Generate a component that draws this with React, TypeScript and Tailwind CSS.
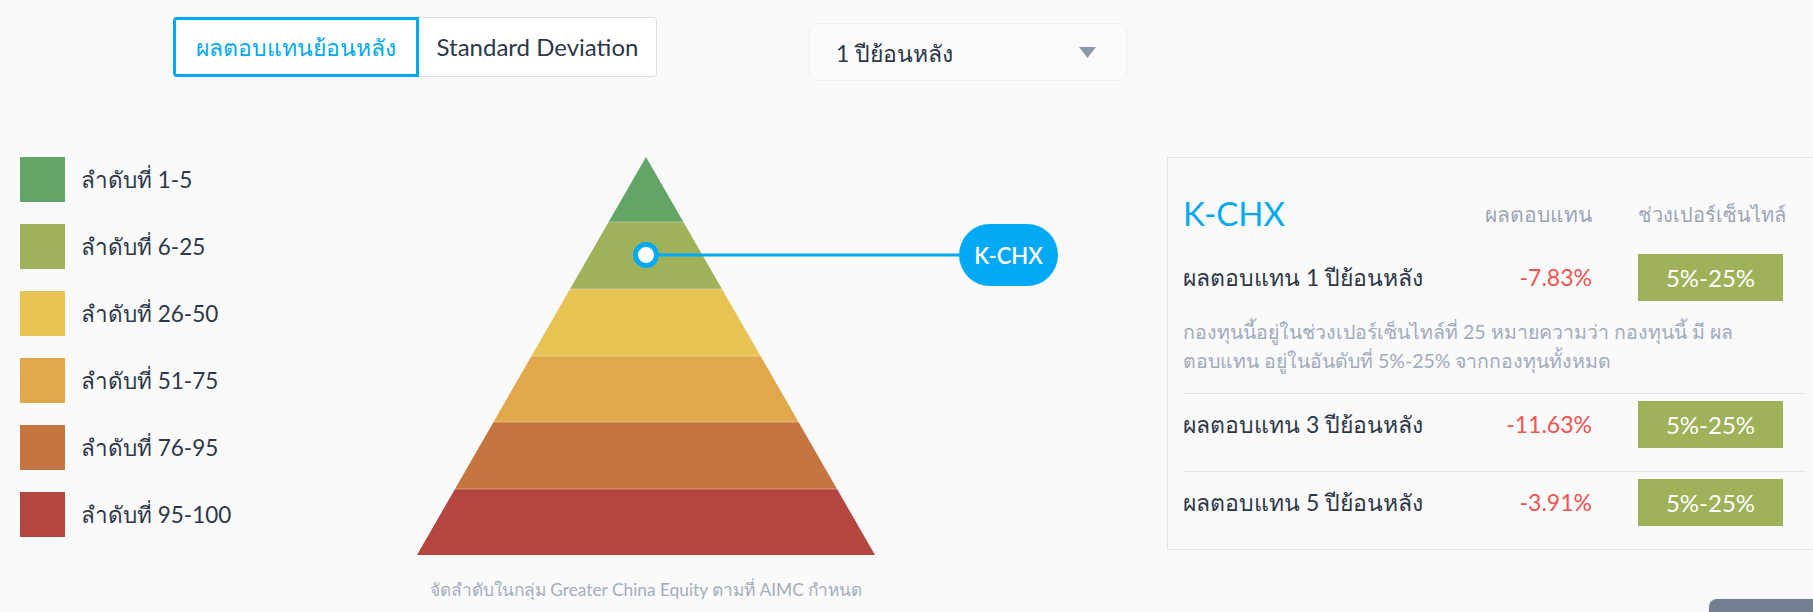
import React from "react";

const font = { fontFamily: 'Lato, "Noto Sans", sans-serif' };

const legend = [
  { color: "bg-[#62a567]", label: "ลำดับที่ 1-5" },
  { color: "bg-[#9fb25a]", label: "ลำดับที่ 6-25" },
  { color: "bg-[#e7c353]", label: "ลำดับที่ 26-50" },
  { color: "bg-[#e0a84b]", label: "ลำดับที่ 51-75" },
  { color: "bg-[#c57640]", label: "ลำดับที่ 76-95" },
  { color: "bg-[#b4453f]", label: "ลำดับที่ 95-100" },
];

// pyramid geometry, apex at (246, 0), base at y = 398
const bands = [
  { top: 0, bottom: 65, fill: "#62a567" },
  { top: 65, bottom: 132, fill: "#9fb25a" },
  { top: 132, bottom: 199, fill: "#e7c353" },
  { top: 199, bottom: 265, fill: "#e0a84b" },
  { top: 265, bottom: 332, fill: "#c57640" },
  { top: 332, bottom: 398, fill: "#b4453f" },
];
const apexX = 246;
const slope = 229 / 398;

function band(top: number, bottom: number) {
  const t = top * slope;
  const b = bottom * slope;
  return `${apexX - t},${top} ${apexX + t},${top} ${apexX + b},${bottom} ${apexX - b},${bottom}`;
}

const rows = [
  { label: "ผลตอบแทน 3 ปีย้อนหลัง", value: "-11.63%", range: "5%-25%" },
  { label: "ผลตอบแทน 5 ปีย้อนหลัง", value: "-3.91%", range: "5%-25%" },
];

function Row({ label, value, range }: { label: string; value: string; range: string }) {
  return (
    <div className="flex items-center h-[47px] pr-[23px]">
      <div className="flex-1 text-[23px] text-[#2d3748] whitespace-nowrap">{label}</div>
      <div className="w-[150px] text-right text-[23px] text-[#ef5350]">{value}</div>
      <div className="ml-[46px] w-[145px] h-[47px] flex items-center justify-center bg-[#9fb25a] text-white text-[24px]">
        {range}
      </div>
    </div>
  );
}

export default function App() {
  return (
    <div className="relative w-[1813px] h-[612px] overflow-hidden bg-[#fafafa]" style={font}>
      {/* Top controls */}
      <div className="flex items-start h-[77px] pt-[17px]">
        <div className="ml-[173px] flex shrink-0 h-[60px] rounded-[4px] bg-white">
          <button className="w-[246px] h-full border-[3px] border-[#03a9f4] rounded-l-[4px] text-[#03a9f4] text-[23px]">
            ผลตอบแทนย้อนหลัง
          </button>
          <button className="w-[238px] h-full border border-l-0 border-[#dcdfe4] rounded-r-[4px] text-[#2d3748] text-[24px]">
            Standard Deviation
          </button>
        </div>
        <div className="ml-[152px] mt-[6px] shrink-0 w-[318px] h-[58px] flex items-center justify-between pl-[26px] pr-[30px] rounded-[8px] border border-[#f0f0f2] bg-[#fbfbfb]">
          <span className="text-[23px] text-[#2d3748] pt-[3px]">1 ปีย้อนหลัง</span>
          <svg width="17" height="11" viewBox="0 0 17 11">
            <polygon points="0,0 17,0 8.5,11" fill="#8e98aa" />
          </svg>
        </div>
      </div>

      {/* Main */}
      <div className="flex items-start mt-[80px] pl-[20px]">
        {/* Legend */}
        <div className="w-[380px] shrink-0 flex flex-col gap-[22px]">
          {legend.map((l) => (
            <div key={l.label} className="flex items-center gap-[16px]">
              <div className={`w-[45px] h-[45px] ${l.color}`} />
              <span className="text-[22.5px] text-[#2d3748]">{l.label}</span>
            </div>
          ))}
        </div>

        {/* Pyramid chart */}
        <div className="w-[767px] shrink-0">
          <div className="relative w-[680px] h-[400px]">
            <svg width="680" height="400" viewBox="0 0 680 400">
              {bands.map((b) => (
                <polygon key={b.top} points={band(b.top, b.bottom)} fill={b.fill} />
              ))}
              {bands.slice(1).map((b) => (
                <line
                  key={b.top}
                  x1={apexX - b.top * slope}
                  x2={apexX + b.top * slope}
                  y1={b.top}
                  y2={b.top}
                  stroke="rgba(255,255,255,0.35)"
                  strokeWidth="1"
                />
              ))}
              <line x1="258" y1="98" x2="562" y2="98" stroke="#03a9f4" strokeWidth="3" />
              <circle cx="246" cy="98" r="10.5" fill="#ffffff" stroke="#03a9f4" strokeWidth="5" />
            </svg>
            <div className="absolute left-[559px] top-[67px] w-[99px] h-[62px] rounded-[31px] bg-[#03a9f4] flex items-center justify-center text-white text-[22px] font-semibold">
              K-CHX
            </div>
          </div>
          <div className="mt-[20px] w-[492px] text-center text-[17.3px] text-[#a3adbf] whitespace-nowrap">
            จัดลำดับในกลุ่ม Greater China Equity ตามที่ AIMC กำหนด
          </div>
        </div>

        {/* Detail panel */}
        <div className="w-[655px] shrink-0 border border-[#e3e5ea] px-[15px]">
          <div className="pb-[18px] border-b border-[#e3e5ea]">
            <div className="flex items-center h-[48px] mt-[32px] pr-[23px]">
              <div className="flex-1 text-[33px] text-[#03a9f4]">K-CHX</div>
              <div className="w-[150px] text-right text-[21px] text-[#9aa5b8] whitespace-nowrap">ผลตอบแทน</div>
              <div className="ml-[46px] w-[145px] text-center text-[20px] text-[#9aa5b8] whitespace-nowrap">
                ช่วงเปอร์เซ็นไทล์
              </div>
            </div>
            <div className="mt-[16px]">
              <Row label="ผลตอบแทน 1 ปีย้อนหลัง" value="-7.83%" range="5%-25%" />
            </div>
            <p className="mt-[16px] text-[19.5px] leading-[29px] text-[#a0abbe] whitespace-nowrap">
              กองทุนนี้อยู่ในช่วงเปอร์เซ็นไทล์ที่ 25 หมายความว่า กองทุนนี้ มี ผล
              <br />
              ตอบแทน อยู่ในอันดับที่ 5%-25% จากกองทุนทั้งหมด
            </p>
          </div>
          {rows.map((r, i) => (
            <div
              key={r.label}
              className={`pt-[7px] pb-[23px] ${i < rows.length - 1 ? "border-b border-[#e3e5ea]" : ""}`}
            >
              <Row {...r} />
            </div>
          ))}
        </div>
      </div>

      {/* corner button peeking from below */}
      <div className="absolute right-0 bottom-0 w-[104px] h-[13px] rounded-tl-[8px] bg-[#737e91] shadow" />
    </div>
  );
}
